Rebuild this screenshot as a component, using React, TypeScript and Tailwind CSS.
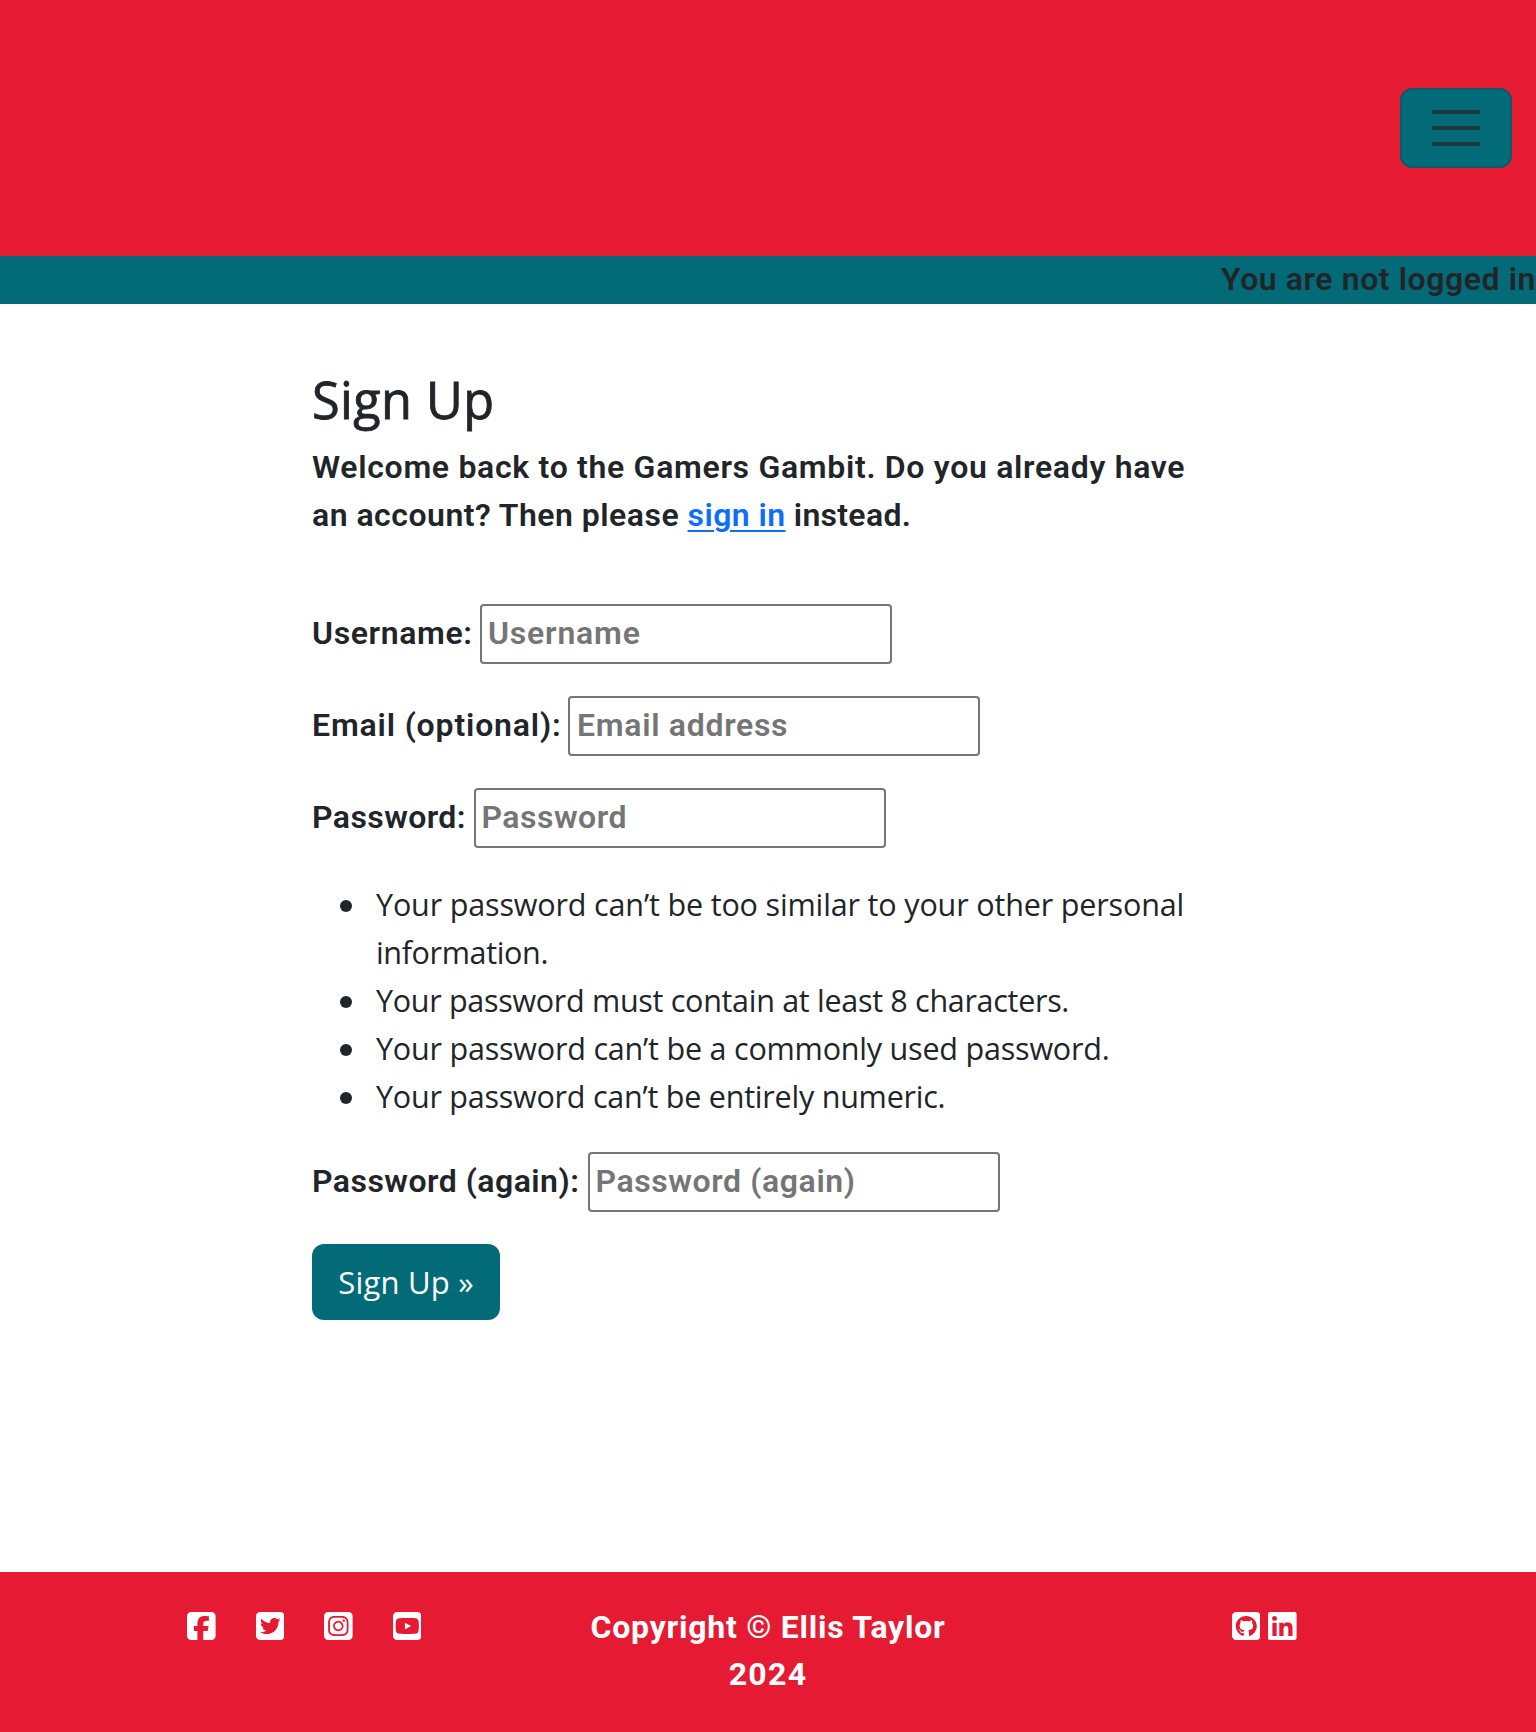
import { FaSquareFacebook, FaSquareTwitter, FaSquareInstagram, FaSquareYoutube, FaSquareGithub, FaLinkedin } from 'react-icons/fa6';

const exo = "font-['Roboto','Noto_Sans',sans-serif]";
const segoe = "font-['Open_Sans','Noto_Sans',sans-serif]";

type FieldProps = { label: string; labelClass: string; placeholder: string; inputClass: string; type?: string };

function Field({ label, labelClass, placeholder, inputClass, type = 'text' }: FieldProps) {
  return (
    <div className={`flex h-[60px] items-start ${exo} text-[32px] font-semibold leading-[48px]`}>
      <label className={`shrink-0 whitespace-nowrap pt-[5px] ${labelClass}`}>{label}</label>
      <input
        type={type}
        placeholder={placeholder}
        className={`h-[60px] w-[412px] shrink-0 rounded-[4px] border-2 border-[#767676] bg-white px-[6px] pb-[2px] placeholder:text-[#757575] placeholder:opacity-100 ${inputClass}`}
      />
    </div>
  );
}

const rules = [
  [{ text: 'Your password can’t be too similar to your other personal', tracking: 'tracking-[-0.15px]' }, { text: 'information.', tracking: 'tracking-[-0.35px]' }],
  [{ text: 'Your password must contain at least 8 characters.', tracking: 'tracking-[-0.3px]' }],
  [{ text: 'Your password can’t be a commonly used password.', tracking: 'tracking-[-0.2px]' }],
  [{ text: 'Your password can’t be entirely numeric.', tracking: 'tracking-[-0.23px]' }],
];

const iconClass = 'h-8 w-[28.6px]';

export default function App() {
  return (
    <div className="flex h-[1732px] w-[1536px] flex-col overflow-hidden bg-white text-[#212529]">
      <header className="flex h-[256px] shrink-0 items-center justify-end bg-[#e61a33] pr-6">
        <button
          aria-label="Toggle navigation"
          className="flex h-20 w-28 flex-col items-center justify-center gap-3 rounded-xl border-2 border-[#075e6a] bg-[#036a77]"
        >
          <span className="h-1 w-12 rounded-full bg-[#1b363d]" />
          <span className="h-1 w-12 rounded-full bg-[#1b363d]" />
          <span className="h-1 w-12 rounded-full bg-[#1b363d]" />
        </button>
      </header>
      <div className={`flex h-12 shrink-0 justify-end whitespace-nowrap bg-[#036a77] text-[32px] font-semibold leading-[46px] ${exo}`}>
        <span className="tracking-[0.57px]">You are not logged in</span>
      </div>

      <main className="flex grow flex-col items-start pl-[312px] pt-[66px]">
        <h1 className={`h-[73px] whitespace-nowrap text-[50.5px] font-medium leading-[60px] tracking-[0.4px] [-webkit-text-stroke:0.8px_#212529] ${segoe}`}>Sign Up</h1>
        <div className={`whitespace-nowrap text-[32px] font-semibold leading-[48px] ${exo}`}>
          <div><span className="tracking-[0.69px]">Welcome back to the Gamers Gambit. Do you already have</span></div>
          <div>
            <span className="tracking-[0.48px]">an account? Then please </span>
            <a href="#" className="tracking-[0.43px] text-[#0d6efd] underline decoration-2 underline-offset-[4px]">sign in</a>
            <span className="tracking-[0.3px]"> instead.</span>
          </div>
        </div>
        <form className="mt-[65px] flex flex-col items-start">
          <div className="flex flex-col gap-8">
            <Field label="Username:" labelClass="w-[168px] tracking-[0.62px]" placeholder="Username" inputClass="tracking-[0.8px]" />
            <Field label="Email (optional):" labelClass="w-[256px] tracking-[0.84px]" placeholder="Email address" inputClass="pl-[7px] tracking-[0.7px]" />
            <Field label="Password:" labelClass="w-[162px] tracking-[0.42px]" placeholder="Password" inputClass="pl-[5.5px] tracking-[0.5px]" type="password" />
          </div>
          <ul className={`mt-8 mb-px list-none whitespace-nowrap text-[30.5px] leading-[48px] ${segoe}`}>
            {rules.map((lines) => (
              <li key={lines[0].text} className="flex items-start pl-7">
                <span className="mt-[20px] mr-6 h-3 w-3 rounded-full bg-[#212529]" />
                <div>
                  {lines.map(({ text, tracking }) => (
                    <div key={text}><span className={tracking}>{text}</span></div>
                  ))}
                </div>
              </li>
            ))}
          </ul>
          <div className="mt-[31px]">
            <Field label="Password (again):" labelClass="w-[276px] tracking-[0.48px]" placeholder="Password (again)" inputClass="pl-[5.5px] tracking-[0.6px]" type="password" />
          </div>
          <button type="button" className={`mt-8 h-[76px] w-[188px] whitespace-nowrap rounded-xl bg-[#036a77] text-[31px] leading-[48px] tracking-[0.2px] text-white ${segoe}`}>
            Sign Up »
          </button>
        </form>
      </main>

      <footer className="grid h-[160px] shrink-0 grid-cols-[512px_512px_512px] bg-[#e61a33] pt-[30px] text-white">
        <div className="flex pt-2 pl-[187px]">
          <div className="flex h-8 gap-[40px]">
            <FaSquareFacebook preserveAspectRatio="none" className={iconClass} />
            <FaSquareTwitter preserveAspectRatio="none" className={iconClass} />
            <FaSquareInstagram preserveAspectRatio="none" className={iconClass} />
            <FaSquareYoutube preserveAspectRatio="none" className={iconClass} />
          </div>
        </div>
        <div className={`pt-px text-center text-[32px] font-bold leading-[48px] ${exo}`}>
          <div><span className="tracking-[0.75px]">Copyright © Ellis Taylor</span></div>
          <div className="-mt-px"><span className="tracking-[1.3px]">2024</span></div>
        </div>
        <div className="flex gap-[7.8px] pt-2 pl-[207.8px]">
          <FaSquareGithub preserveAspectRatio="none" className={iconClass} />
          <FaLinkedin preserveAspectRatio="none" className={iconClass} />
        </div>
      </footer>
    </div>
  );
}
